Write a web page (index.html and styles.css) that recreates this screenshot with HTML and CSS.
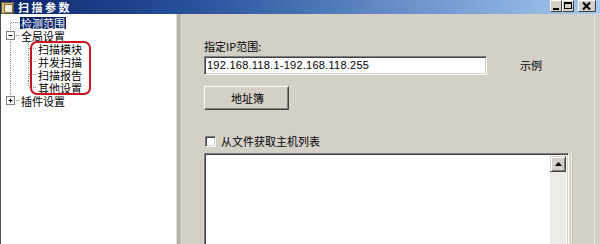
FILE: index.html
```html
<!DOCTYPE html>
<html lang="zh-CN">
<head>
<meta charset="utf-8">
<title>扫描参数</title>
<link rel="stylesheet" href="styles.css">
</head>
<body>
<div class="win">
  <div class="titlebar">
    <svg class="appicon" width="13" height="13" viewBox="0 0 13 13">
      <rect x="0.5" y="1.5" width="12" height="11" fill="#c8b070" stroke="#6a5a30"/>
      <rect x="3.5" y="3.5" width="8" height="8" fill="#f4f0e0" stroke="#807050"/>
      <rect x="1" y="2" width="2" height="10" fill="#e0c860"/>
    </svg>
    <span class="title">扫描参数</span>
    <div class="caps">
      <span class="cap"><svg width="12" height="12" viewBox="0 0 12 12"><rect x="3" y="8" width="6" height="2" fill="#000"/></svg></span>
      <span class="cap"><svg width="12" height="12" viewBox="0 0 12 12"><rect x="2.5" y="2.5" width="7" height="6" fill="none" stroke="#000"/><rect x="2" y="2" width="8" height="2" fill="#000"/></svg></span>
      <span class="cap close"><svg width="18" height="12" viewBox="0 0 18 12"><path d="M5 2.5 L12 9.5 M12 2.5 L5 9.5" stroke="#000" stroke-width="2"/></svg></span>
    </div>
  </div>
  <div class="main">
    <div class="tree">
      <div class="row">
        <svg class="g" width="20" height="13" viewBox="0 0 20 13"><path d="M10.5 7 V13 M11 6.5 H20" class="dl"/></svg>
        <span class="lbl sel">检测范围</span>
      </div>
      <div class="row">
        <svg class="g" width="20" height="13" viewBox="0 0 20 13"><path d="M10.5 0 V13 M14 6.5 H20" class="dl"/><rect x="6.5" y="2.5" width="8" height="8" fill="#fff" stroke="#808080"/><path d="M8.5 6.5 H12.5" stroke="#000"/></svg>
        <span class="lbl">全局设置</span>
      </div>
      <div class="row">
        <svg class="g" width="37" height="13" viewBox="0 0 37 13"><path d="M10.5 0 V13 M28.5 0 V13 M29 6.5 H37" class="dl"/></svg>
        <span class="lbl">扫描模块</span>
      </div>
      <div class="row">
        <svg class="g" width="37" height="13" viewBox="0 0 37 13"><path d="M10.5 0 V13 M28.5 0 V13 M29 6.5 H37" class="dl"/></svg>
        <span class="lbl">并发扫描</span>
      </div>
      <div class="row">
        <svg class="g" width="37" height="13" viewBox="0 0 37 13"><path d="M10.5 0 V13 M28.5 0 V13 M29 6.5 H37" class="dl"/></svg>
        <span class="lbl">扫描报告</span>
      </div>
      <div class="row">
        <svg class="g" width="37" height="13" viewBox="0 0 37 13"><path d="M10.5 0 V13 M28.5 0 V6 M29 6.5 H37" class="dl"/></svg>
        <span class="lbl">其他设置</span>
      </div>
      <div class="row">
        <svg class="g" width="20" height="13" viewBox="0 0 20 13"><path d="M10.5 0 V3 M14 6.5 H20" class="dl"/><rect x="6.5" y="2.5" width="8" height="8" fill="#fff" stroke="#808080"/><path d="M8.5 6.5 H12.5 M10.5 4.5 V8.5" stroke="#000"/></svg>
        <span class="lbl">插件设置</span>
      </div>
      <div class="mark"></div>
    </div>
    <div class="splitter"></div>
    <div class="pane">
      <div class="label">指定IP范围:</div>
      <div class="iprow">
        <div class="input">192.168.118.1-192.168.118.255</div>
        <span class="example">示例</span>
      </div>
      <div class="btn">地址簿</div>
      <div class="check"><span class="box"></span><span class="checktxt">从文件获取主机列表</span></div>
      <div class="listrow">
        <div class="list">
          <div class="listbody"></div>
          <div class="vscroll">
            <div class="up"><svg width="7" height="4" viewBox="0 0 7 4"><path d="M3.5 0 L7 4 H0 Z" fill="#000"/></svg></div>
            <div class="track"></div>
          </div>
        </div>
        <div class="edge"></div>
      </div>
    </div>
  </div>
</div>
</body>
</html>
```

FILE: styles.css
```css
* { box-sizing: border-box; }
html, body { margin: 0; padding: 0; }
body {
  width: 600px;
  height: 244px;
  overflow: hidden;
  background: #d4d0c8;
  font-family: "Noto Sans CJK SC", "Liberation Sans", sans-serif;
  font-size: 11px;
  color: #000;
}
.win { display: flex; flex-direction: column; height: 244px; }

.titlebar {
  height: 14px;
  flex: none;
  display: flex;
  align-items: center;
  background: linear-gradient(to right, #0a246a 0%, #2c56a0 35%, #a6caf0 100%);
  color: #fff;
  overflow: hidden;
}
.appicon { margin-left: 1px; flex: none; }
.title {
  display: block;
  margin-left: 4px;
  font-weight: bold;
  font-size: 11px;
  letter-spacing: 2.5px;
  height: 14px;
  line-height: 14px;
}
.caps {
  margin-left: auto;
  margin-right: 4px;
  display: flex;
  align-self: flex-start;
}
.cap {
  width: 12px;
  height: 12px;
  background: #d4d0c8;
  border: 1px solid;
  border-color: #fff #404040 #404040 #fff;
  display: flex;
  align-items: center;
  justify-content: center;
}
.cap svg { flex: none; }
.cap.close { width: 18px; margin-left: 4px; }

.main { flex: 1; display: flex; min-height: 0; }

.tree {
  position: relative;
  width: 177px;
  flex: none;
  background: #fff;
  border-left: 1px solid #505050;
  border-right: 1px solid #e6e3dd;
  padding-top: 2px;
}
.row {
  height: 13px;
  display: flex;
  align-items: center;
}
.g { flex: none; display: block; margin-left: -1px; }
.dl { stroke: #909090; stroke-width: 1; stroke-dasharray: 1 1; fill: none; }
.lbl {
  display: block;
  height: 12px;
  line-height: 12px;
  padding: 0 1px;
  white-space: nowrap;
}
.lbl.sel { background: #0a246a; color: #fff; }
.mark {
  position: absolute;
  left: 29px;
  top: 27px;
  width: 61px;
  height: 54px;
  border: 2px solid #c8141e;
  border-radius: 7px;
}

.splitter {
  width: 4px;
  flex: none;
  background: #b4b0a8;
  border-right: 1px solid #c8c4bc;
}

.pane {
  flex: 1;
  min-height: 0;
  padding: 26px 0 0 23px;
  display: flex;
  flex-direction: column;
  align-items: flex-start;
  border-right: 1px solid #ebe9e4;
  margin-right: 5px;
}
.pane > * { flex: none; }
.label { line-height: 13px; height: 13px; }
.iprow {
  margin-top: 3px;
  display: flex;
  align-items: center;
}
.input {
  width: 283px;
  height: 19px;
  background: #fff;
  border: 1px solid;
  border-color: #808080 #fff #fff #808080;
  box-shadow: inset 1px 1px #404040, inset -1px -1px #d4d0c8;
  padding-left: 2px;
  font-family: "Liberation Sans", sans-serif;
  font-size: 11px;
  letter-spacing: 0.25px;
  line-height: 17px;
  white-space: nowrap;
}
.example { margin-left: 33px; line-height: 13px; height: 13px; }

.btn {
  margin-top: 11px;
  width: 85px;
  height: 24px;
  border: 1px solid;
  border-color: #fff #404040 #404040 #fff;
  box-shadow: inset -1px -1px #808080;
  background: #d4d0c8;
  display: flex;
  align-items: center;
  justify-content: center;
  padding-left: 2px;
  line-height: 13px;
}

.check {
  margin-top: 25px;
  height: 13px;
  display: flex;
  align-items: center;
}
.checktxt { line-height: 13px; height: 13px; }
.box {
  width: 11px;
  height: 11px;
  margin-left: 1px;
  background: #fff;
  border: 1px solid;
  border-color: #808080 #fff #fff #808080;
  box-shadow: inset 1px 1px #404040, inset -1px -1px #d4d0c8;
  margin-right: 5px;
}

.listrow {
  margin-top: 5px;
  display: flex;
  align-items: stretch;
}
.list {
  width: 365px;
  height: 100px;
  background: #fff;
  border: 1px solid;
  border-color: #808080 #fff #fff #808080;
  box-shadow: inset 1px 1px #404040, inset -1px -1px #d4d0c8;
  padding: 2px;
  display: flex;
}
.listbody { flex: 1; }
.vscroll {
  width: 16px;
  display: flex;
  flex-direction: column;
}
.up {
  height: 16px;
  background: #d4d0c8;
  border: 1px solid;
  border-color: #d4d0c8 #404040 #404040 #d4d0c8;
  box-shadow: inset 1px 1px #fff, inset -1px -1px #808080;
  display: flex;
  align-items: center;
  justify-content: center;
}
.track {
  flex: 1;
  background: #ecebe7;
}
.edge {
  width: 2px;
  margin-left: 2px;
  border-left: 1px solid #f2f1ee;
  border-right: 1px solid #c4c0b8;
}
```
